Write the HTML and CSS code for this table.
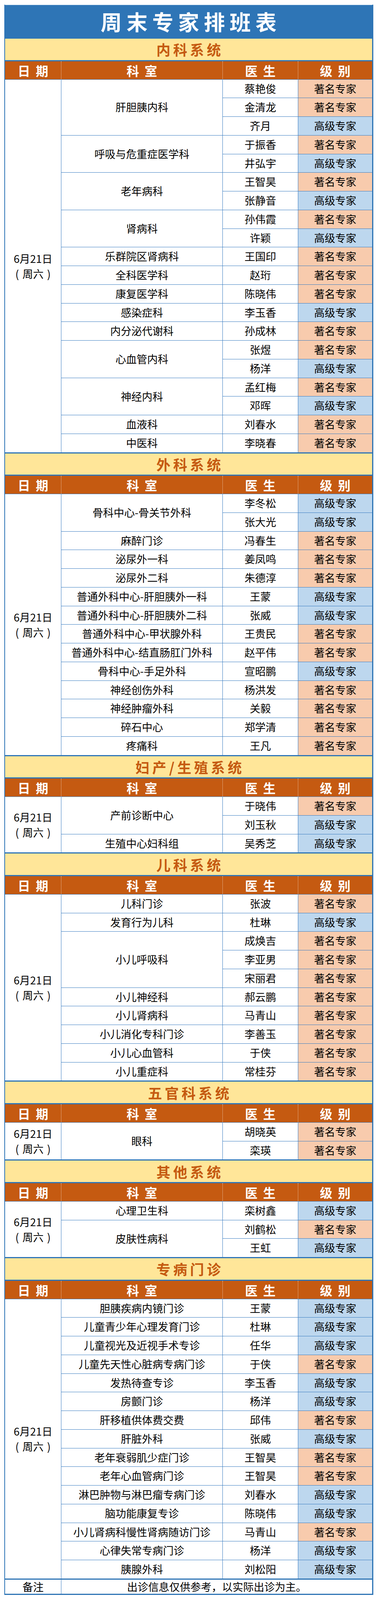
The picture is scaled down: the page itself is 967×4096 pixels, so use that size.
FILE: index.html
```html
<!DOCTYPE html>
<html lang="zh-CN">
<head>
<meta charset="utf-8">
<title>周末专家排班表</title>
<link rel="stylesheet" href="styles.css">
</head>
<body>
<div class="sheet">
  <div class="title">周末专家排班表</div>

  <div class="band">内科系统</div>
  <div class="head"><div>日 期</div><div>科 室</div><div>医 生</div><div>级 别</div></div>
  <div class="grid">
    <div class="d s20">6月21日<br>( 周六 )</div>
    <div class="k s3">肝胆胰内科</div><div class="n">蔡艳俊</div><div class="lv a">著名专家</div>
    <div class="n">金清龙</div><div class="lv a">著名专家</div>
    <div class="n">齐月</div><div class="lv b">高级专家</div>
    <div class="k s2">呼吸与危重症医学科</div><div class="n">于振香</div><div class="lv a">著名专家</div>
    <div class="n">井弘宇</div><div class="lv b">高级专家</div>
    <div class="k s2">老年病科</div><div class="n">王智昊</div><div class="lv a">著名专家</div>
    <div class="n">张静音</div><div class="lv b">高级专家</div>
    <div class="k s2">肾病科</div><div class="n">孙伟霞</div><div class="lv a">著名专家</div>
    <div class="n">许颖</div><div class="lv b">高级专家</div>
    <div class="k">乐群院区肾病科</div><div class="n">王国印</div><div class="lv a">著名专家</div>
    <div class="k">全科医学科</div><div class="n">赵珩</div><div class="lv a">著名专家</div>
    <div class="k">康复医学科</div><div class="n">陈晓伟</div><div class="lv a">著名专家</div>
    <div class="k">感染症科</div><div class="n">李玉香</div><div class="lv b">高级专家</div>
    <div class="k">内分泌代谢科</div><div class="n">孙成林</div><div class="lv a">著名专家</div>
    <div class="k s2">心血管内科</div><div class="n">张煜</div><div class="lv a">著名专家</div>
    <div class="n">杨洋</div><div class="lv b">高级专家</div>
    <div class="k s2">神经内科</div><div class="n">孟红梅</div><div class="lv a">著名专家</div>
    <div class="n">邓晖</div><div class="lv b">高级专家</div>
    <div class="k">血液科</div><div class="n">刘春水</div><div class="lv a">著名专家</div>
    <div class="k">中医科</div><div class="n">李晓春</div><div class="lv a">著名专家</div>
  </div>

  <div class="band">外科系统</div>
  <div class="head"><div>日 期</div><div>科 室</div><div>医 生</div><div>级 别</div></div>
  <div class="grid">
    <div class="d s14">6月21日<br>( 周六 )</div>
    <div class="k s2">骨科中心-骨关节外科</div><div class="n">李冬松</div><div class="lv b">高级专家</div>
    <div class="n">张大光</div><div class="lv b">高级专家</div>
    <div class="k">麻醉门诊</div><div class="n">冯春生</div><div class="lv a">著名专家</div>
    <div class="k">泌尿外一科</div><div class="n">姜凤鸣</div><div class="lv a">著名专家</div>
    <div class="k">泌尿外二科</div><div class="n">朱德淳</div><div class="lv a">著名专家</div>
    <div class="k">普通外科中心-肝胆胰外一科</div><div class="n">王蒙</div><div class="lv b">高级专家</div>
    <div class="k">普通外科中心-肝胆胰外二科</div><div class="n">张威</div><div class="lv b">高级专家</div>
    <div class="k">普通外科中心-甲状腺外科</div><div class="n">王贵民</div><div class="lv a">著名专家</div>
    <div class="k">普通外科中心-结直肠肛门外科</div><div class="n">赵平伟</div><div class="lv a">著名专家</div>
    <div class="k">骨科中心-手足外科</div><div class="n">宣昭鹏</div><div class="lv b">高级专家</div>
    <div class="k">神经创伤外科</div><div class="n">杨洪发</div><div class="lv a">著名专家</div>
    <div class="k">神经肿瘤外科</div><div class="n">关毅</div><div class="lv a">著名专家</div>
    <div class="k">碎石中心</div><div class="n">郑学清</div><div class="lv a">著名专家</div>
    <div class="k">疼痛科</div><div class="n">王凡</div><div class="lv a">著名专家</div>
  </div>

  <div class="band">妇产/生殖系统</div>
  <div class="head"><div>日 期</div><div>科 室</div><div>医 生</div><div>级 别</div></div>
  <div class="grid">
    <div class="d s3">6月21日<br>( 周六 )</div>
    <div class="k s2">产前诊断中心</div><div class="n">于晓伟</div><div class="lv a">著名专家</div>
    <div class="n">刘玉秋</div><div class="lv b">高级专家</div>
    <div class="k">生殖中心妇科组</div><div class="n">吴秀芝</div><div class="lv b">高级专家</div>
  </div>

  <div class="band">儿科系统</div>
  <div class="head"><div>日 期</div><div>科 室</div><div>医 生</div><div>级 别</div></div>
  <div class="grid">
    <div class="d s10">6月21日<br>( 周六 )</div>
    <div class="k">儿科门诊</div><div class="n">张波</div><div class="lv a">著名专家</div>
    <div class="k">发育行为儿科</div><div class="n">杜琳</div><div class="lv b">高级专家</div>
    <div class="k s3">小儿呼吸科</div><div class="n">成焕吉</div><div class="lv a">著名专家</div>
    <div class="n">李亚男</div><div class="lv a">著名专家</div>
    <div class="n">宋丽君</div><div class="lv a">著名专家</div>
    <div class="k">小儿神经科</div><div class="n">郝云鹏</div><div class="lv a">著名专家</div>
    <div class="k">小儿肾病科</div><div class="n">马青山</div><div class="lv a">著名专家</div>
    <div class="k">小儿消化专科门诊</div><div class="n">李善玉</div><div class="lv a">著名专家</div>
    <div class="k">小儿心血管科</div><div class="n">于侠</div><div class="lv a">著名专家</div>
    <div class="k">小儿重症科</div><div class="n">常桂芬</div><div class="lv a">著名专家</div>
  </div>

  <div class="band">五官科系统</div>
  <div class="head"><div>日 期</div><div>科 室</div><div>医 生</div><div>级 别</div></div>
  <div class="grid">
    <div class="d s2">6月21日<br>( 周六 )</div>
    <div class="k s2">眼科</div><div class="n">胡晓英</div><div class="lv a">著名专家</div>
    <div class="n">栾瑛</div><div class="lv a">著名专家</div>
  </div>

  <div class="band">其他系统</div>
  <div class="head"><div>日 期</div><div>科 室</div><div>医 生</div><div>级 别</div></div>
  <div class="grid">
    <div class="d s3">6月21日<br>( 周六 )</div>
    <div class="k">心理卫生科</div><div class="n">栾树鑫</div><div class="lv b">高级专家</div>
    <div class="k s2">皮肤性病科</div><div class="n">刘鹤松</div><div class="lv a">著名专家</div>
    <div class="n">王虹</div><div class="lv b">高级专家</div>
  </div>

  <div class="band">专病门诊</div>
  <div class="head"><div>日 期</div><div>科 室</div><div>医 生</div><div>级 别</div></div>
  <div class="grid">
    <div class="d s15">6月21日<br>( 周六 )</div>
    <div class="k">胆胰疾病内镜门诊</div><div class="n">王蒙</div><div class="lv b">高级专家</div>
    <div class="k">儿童青少年心理发育门诊</div><div class="n">杜琳</div><div class="lv b">高级专家</div>
    <div class="k">儿童视光及近视手术专诊</div><div class="n">任华</div><div class="lv b">高级专家</div>
    <div class="k">儿童先天性心脏病专病门诊</div><div class="n">于侠</div><div class="lv a">著名专家</div>
    <div class="k">发热待查专诊</div><div class="n">李玉香</div><div class="lv b">高级专家</div>
    <div class="k">房颤门诊</div><div class="n">杨洋</div><div class="lv b">高级专家</div>
    <div class="k">肝移植供体费交费</div><div class="n">邱伟</div><div class="lv a">著名专家</div>
    <div class="k">肝脏外科</div><div class="n">张威</div><div class="lv b">高级专家</div>
    <div class="k">老年衰弱肌少症门诊</div><div class="n">王智昊</div><div class="lv a">著名专家</div>
    <div class="k">老年心血管病门诊</div><div class="n">王智昊</div><div class="lv a">著名专家</div>
    <div class="k">淋巴肿物与淋巴瘤专病门诊</div><div class="n">刘春水</div><div class="lv b">高级专家</div>
    <div class="k">脑功能康复专诊</div><div class="n">陈晓伟</div><div class="lv b">高级专家</div>
    <div class="k">小儿肾病科慢性肾病随访门诊</div><div class="n">马青山</div><div class="lv a">著名专家</div>
    <div class="k">心律失常专病门诊</div><div class="n">杨洋</div><div class="lv b">高级专家</div>
    <div class="k">胰腺外科</div><div class="n">刘松阳</div><div class="lv b">高级专家</div>
  </div>

  <div class="note">
    <div>备注</div>
    <div>出诊信息仅供参考，以实际出诊为主。</div>
  </div>
</div>
</body>
</html>
```
FILE: styles.css
```css
* { box-sizing: border-box; margin: 0; padding: 0; }

body {
  margin: 0;
  background: #ffffff;
  font-family: "Noto Sans CJK SC", "Noto Sans", sans-serif;
  color: #000000;
}

.sheet {
  width: 944px;
  margin: 12px 0 0 11px;
  border-left: 2px solid #2e75b6;
  border-right: 3px solid #2e75b6;
}

.title {
  height: 84px;
  border-top: 1px solid #bdd7ee;
  background: #2e75b6;
  color: #ffffff;
  font-size: 54px;
  font-weight: 700;
  letter-spacing: 12px;
  padding-left: 12px;
  line-height: 1;
  display: flex;
  align-items: center;
  justify-content: center;
}

.band {
  height: 60.5px;
  border-top: 3px solid #2e75b6;
  border-bottom: 3px solid #2e75b6;
  background: #ffe699;
  color: #c55a11;
  font-size: 36px;
  font-weight: 700;
  letter-spacing: 7px;
  padding-left: 7px;
  line-height: 1;
  display: flex;
  align-items: center;
  justify-content: center;
}

.head {
  height: 46px;
  display: grid;
  grid-template-columns: 143px 413px 193px 1fr;
  background: #c55a11;
  color: #ffffff;
  font-size: 32px;
  font-weight: 700;
  line-height: 1;
  word-spacing: 7px;
}

.head > div {
  display: flex;
  align-items: center;
  justify-content: center;
}

.head > div + div {
  border-left: 1px dotted rgba(255, 255, 255, 0.85);
}

.grid {
  display: grid;
  grid-template-columns: 143px 412px 192px 1fr;
  grid-auto-rows: 46.75px;
  gap: 1px;
  padding-top: 1px;
  background: #3b7dc1;
  font-size: 27px;
  line-height: 1.2;
}

.grid > div {
  background: #ffffff;
  display: flex;
  align-items: center;
  justify-content: center;
  text-align: center;
  white-space: nowrap;
}

.d { grid-column: 1; line-height: 39px; word-spacing: 3px; }
.k { grid-column: 2; }
.n { grid-column: 3; }
.lv { grid-column: 4; }

.grid > .lv.a { background: #f8cbad; }
.grid > .lv.b { background: #bdd7ee; }

.s2 { grid-row: span 2; }
.s3 { grid-row: span 3; }
.s10 { grid-row: span 10; }
.s14 { grid-row: span 14; }
.s15 { grid-row: span 15; }
.s20 { grid-row: span 20; }

.note {
  display: grid;
  grid-template-columns: 143px 1fr;
  gap: 1px;
  height: 42px;
  border-top: 3px solid #2e75b6;
  border-bottom: 3px solid #2e75b6;
  background: #3b7dc1;
  font-size: 27px;
  line-height: 1;
}

.note > div {
  background: #ffffff;
  display: flex;
  align-items: center;
  justify-content: center;
  white-space: nowrap;
}
```
